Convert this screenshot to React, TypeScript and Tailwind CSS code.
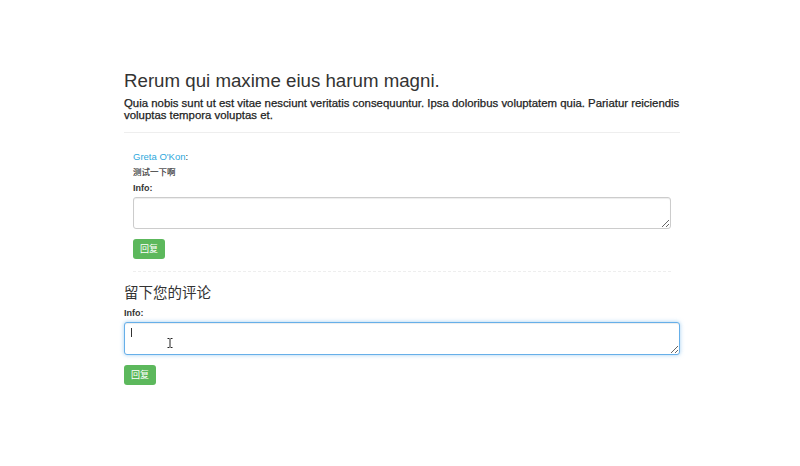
import React from 'react';

const sans = { fontFamily: '"Liberation Sans", "Noto Sans CJK SC", Arial, sans-serif' };

function ReplyButton() {
  return (
    <button className="flex h-[20px] w-[32px] items-center justify-center rounded-[3px] bg-[#5cb85c] text-[9px] leading-none text-white">
      回复
    </button>
  );
}

export default function App() {
  return (
    <div className="min-h-[466px] bg-white text-[#333]" style={sans}>
      <div className="ml-[124px] w-[556px] pt-[70px]">
        {/* ── Post ── */}
        <h1 className="text-[18.7px] leading-[21px] font-normal text-[#333]">Rerum qui maxime eius harum magni.</h1>
        <p className="mt-[6px] whitespace-nowrap text-[11.4px] leading-[12px] font-normal text-[#222] [-webkit-text-stroke:0.25px_#222]">
          Quia nobis sunt ut est vitae nesciunt veritatis consequuntur. Ipsa doloribus voluptatem quia. Pariatur reiciendis
          <br />
          voluptas tempora voluptas et.
        </p>
        <div className="mt-[11px] border-t border-[#eee]" />

        {/* ── Comment ── */}
        <div className="px-[9px] pt-[18px]">
          <div className="text-[9.5px] leading-[12px]">
            <span className="text-[#2ea8dc]">Greta O'Kon</span>
            <span>:</span>
          </div>
          <div className="mt-[3px] text-[8.5px] leading-[12px] text-[#333] [-webkit-text-stroke:0.15px_#333]">测试一下啊</div>
          <label className="mt-[4px] block text-[9px] leading-[12px] font-bold">Info:</label>
          <textarea className="mt-[3px] block h-[32px] w-full rounded-[3px] border border-[#ccc] bg-white shadow-[inset_0_1px_1px_rgba(0,0,0,0.075)] outline-none" />
          <div className="mt-[10px] flex">
            <ReplyButton />
          </div>
          <div className="mt-[12px] border-t border-dashed border-[#eee]" />
        </div>

        {/* ── New comment ── */}
        <h3 className="mt-[12px] text-[14.5px] leading-[18px] font-normal text-[#333]">留下您的评论</h3>
        <label className="mt-[5px] block text-[9px] leading-[12px] font-bold">Info:</label>
        <div className="relative mt-[3px]">
          <textarea className="block h-[33px] w-full rounded-[3px] border border-[#66afe9] bg-white shadow-[inset_0_1px_1px_rgba(0,0,0,0.075),0_0_4px_rgba(102,175,233,0.6)] outline-none" />
          <span className="absolute left-[7px] top-[6px] h-[9px] w-px bg-[#333]" />
          <svg className="absolute left-[43px] top-[16px]" width="6" height="10" viewBox="0 0 6 10">
            <path d="M0.5 0.5h2M3.5 0.5h2M3 1v8M0.5 9.5h2M3.5 9.5h2" stroke="#222" strokeWidth="1" fill="none" />
          </svg>
        </div>
        <div className="mt-[10px] flex">
          <ReplyButton />
        </div>
      </div>
    </div>
  );
}
